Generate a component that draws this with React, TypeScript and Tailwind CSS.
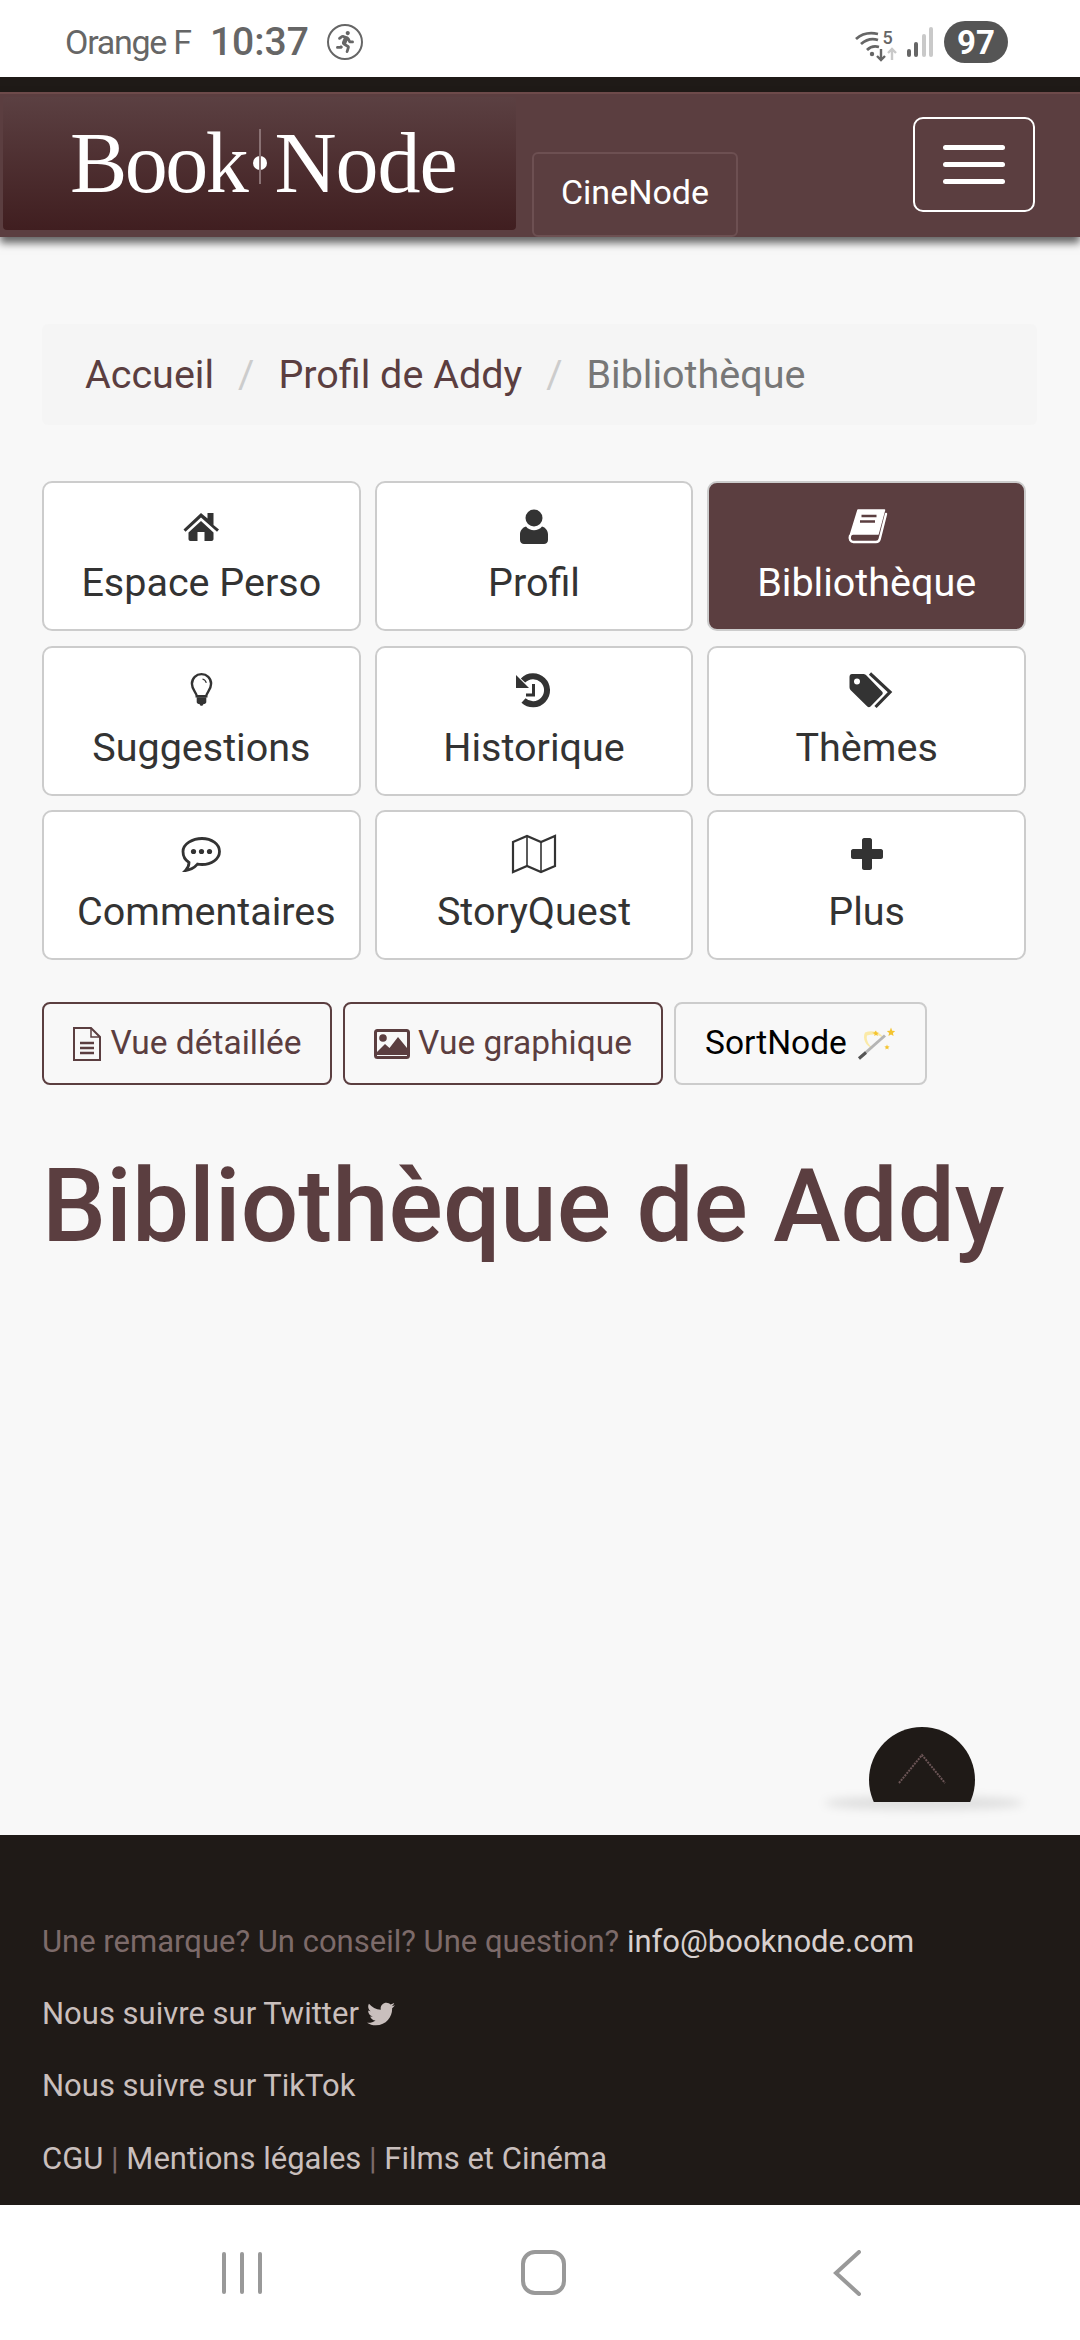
import { FaRunning, FaTwitter } from "react-icons/fa";

function HomeIcon() {
  return (
    <svg viewBox="0 0 60 50" className="h-[50px] w-[60px]" fill="#333">
      <path d="M36.500 13h6v12l5.500 4.500-2 2.200L30 17.500 14.500 31.700l-2-2.200L30 13l6.500 5.500V13z" />
      <path d="M30 21l12.500 11.500V39c0 1.200-.8 2-2 2h-7v-9h-7v9h-7c-1.200 0-2-.8-2-2v-6.500L30 21z" />
    </svg>
  );
}

function UserIcon() {
  return (
    <svg viewBox="0 0 60 50" className="h-[50px] w-[60px]" fill="#333">
      <circle cx="30" cy="18" r="8.500" />
      <path d="M22 26.500c2 2.500 5 3.800 8 3.800s6-1.300 8-3.800c3.500 1 6 4 6 8V40c0 2.500-2 4-4 4H20c-2 0-4-1.500-4-4v-5.500c0-4 2.500-7 6-8z" />
    </svg>
  );
}

function BookIcon() {
  return (
    <svg viewBox="0 0 60 50" className="h-[50px] w-[60px]" fill="none" stroke="#fff">
      <path d="M21 10h26.500L41 34H16c-1.200 0-2 .6-3 2l8-26z" fill="#fff" strokeWidth="1.500" strokeLinejoin="round" />
      <path d="M13 36c-1 3 .5 6 3.500 6H39c2 0 3.200-1 3.700-3L49 14" strokeWidth="2.400" strokeLinecap="round" />
      <path d="M24.500 16h15M23 21.500h15" stroke="#5b3e40" strokeWidth="2.400" />
    </svg>
  );
}

function BulbIcon() {
  return (
    <svg viewBox="0 0 24 36" className="h-[35px] w-[23px]" fill="none" stroke="#333">
      <path d="M7 25c0-4-5-6.500-5-13C2 6 6.500 2 12 2s10 4 10 10c0 6.500-5 9-5 13H7z" strokeWidth="2.500" />
      <path d="M13 7c2 .5 3.500 2 4 4" strokeWidth="1.200" />
      <path d="M7 26h10v5c0 1-1 2-2 2h-1c0 1-1 2-2 2s-2-1-2-2H9c-1 0-2-1-2-2v-5z" fill="#333" stroke="none" />
    </svg>
  );
}

function HistoryIcon() {
  return (
    <svg viewBox="0 0 60 50" className="h-[50px] w-[60px]" fill="none" stroke="#333">
      <path d="M19 15.500A14 14 0 1 1 19.500 35.500" strokeWidth="6" />
      <path d="M12 10v13h13L12 10z" fill="#333" stroke="none" />
      <path d="M29.500 19v11H22" strokeWidth="3" />
    </svg>
  );
}

function TagsIcon() {
  return (
    <svg viewBox="0 0 60 50" className="h-[50px] w-[60px]" fill="none">
      <path
        fillRule="evenodd"
        clipRule="evenodd"
        d="M15 9h11c1.500 0 2.500.5 3.500 1.500L45 26.500c1 1 1 2.200 0 3.200L33.500 41.500c-1 1-2.200 1-3.200 0L14 25.500c-1-1-1.500-2-1.500-3.500V12c0-2 1-3 2.500-3zM20 13.500a3 3 0 1 0 0 6 3 3 0 0 0 0-6z"
        fill="#333"
      />
      <path d="M33 8.500l20 18.500-14.500 15" stroke="#333" strokeWidth="3.200" />
    </svg>
  );
}

function CommentIcon() {
  return (
    <svg viewBox="0 0 40 35" className="h-[35px] w-[40px]" fill="none" stroke="#333">
      <path d="M21 1.500c9.500 0 17.500 5.500 17.500 13S30.500 27.500 21 27.500c-1.500 0-3-.1-4.500-.4C13.500 30.500 9 33 4.500 33.500c2-2 3.500-4.500 3.500-8C4 23 2 19 2 14.500 2 7 11.500 1.500 21 1.500z" strokeWidth="2.800" />
      <circle cx="12.500" cy="14.500" r="2.600" fill="#333" stroke="none" />
      <circle cx="20.500" cy="14.500" r="2.600" fill="#333" stroke="none" />
      <circle cx="28.500" cy="14.500" r="2.600" fill="#333" stroke="none" />
    </svg>
  );
}

function MapIcon() {
  return (
    <svg viewBox="0 0 46 40" className="h-[40px] w-[46px]" fill="none" stroke="#333" strokeWidth="2.200">
      <path d="M2 8l14-6 14 6 14-6v30l-14 6-14-6-14 6V8z" />
      <path d="M16 2v30M30 8v30" strokeWidth="1.600" />
    </svg>
  );
}

function PlusIcon() {
  return (
    <svg viewBox="0 0 32 32" className="h-[32px] w-[32px]" fill="#333">
      <path d="M13 0h6c1 0 2 1 2 2v9h9c1 0 2 1 2 2v6c0 1-1 2-2 2h-9v9c0 1-1 2-2 2h-6c-1 0-2-1-2-2v-9H2c-1 0-2-1-2-2v-6c0-1 1-2 2-2h9V2c0-1 1-2 2-2z" />
    </svg>
  );
}

function FileIcon() {
  return (
    <svg viewBox="0 0 30 34" className="h-[34px] w-[30px]" fill="none" stroke="#5b3e40" strokeWidth="2">
      <path d="M2 1h17l9 9v23H2V1z" />
      <path d="M19 1v9h9" strokeWidth="1.500" />
      <path d="M8 16h14M8 21h14M8 26h14" strokeWidth="2.400" />
    </svg>
  );
}

function PictureIcon() {
  return (
    <svg viewBox="0 0 36 30" className="h-[30px] w-[36px]">
      <rect x="1.500" y="1.500" width="33" height="27" rx="2" fill="none" stroke="#5b3e40" strokeWidth="3" />
      <circle cx="9" cy="9" r="3.800" fill="#5b3e40" />
      <path d="M3 26v-3l8-8 4.500 4L24 8l9 11v7H3z" fill="#5b3e40" />
    </svg>
  );
}

function WandIcon() {
  return (
    <svg viewBox="0 0 38 34" className="h-[37px] w-[38px]">
      <path d="M8 6c8-3 16 0 19 6-5-4-10-5-17-3-1 4 1 9 6 13-7-2-11-10-8-16z" fill="#fbe89a" opacity="0.85" />
      <path d="M2 32L28 9" stroke="#b5b5b5" strokeWidth="3" />
      <path d="M2 32l7-6" stroke="#555" strokeWidth="3" />
      <path d="M34 1l1.200 3.200 3 .3-2.300 2 .7 3-2.600-1.600-2.600 1.600.7-3-2.300-2 3-.3z" fill="#f4c430" />
      <path d="M19 4l.8 2 2 .2-1.500 1.300.5 2-1.800-1-1.800 1 .5-2L15.200 6.200l2-.2z" fill="#f4c430" />
      <path d="M30 18l.7 1.800 1.900.2-1.400 1.200.4 1.800-1.600-1-1.600 1 .4-1.800-1.400-1.200 1.900-.2z" fill="#f4c430" />
    </svg>
  );
}

function WifiIcon() {
  return (
    <svg viewBox="0 0 50 40" className="h-[40px] w-[50px]" fill="none">
      <path d="M5 17Q14 9 27 12" stroke="#666" strokeWidth="2.800" />
      <path d="M10 22Q18 15 27 18" stroke="#666" strokeWidth="2.800" />
      <path d="M16 28Q21 23 28 25" stroke="#666" strokeWidth="2.800" />
      <circle cx="21" cy="32" r="2.200" fill="#666" />
      <path d="M30 27v11M26 34l4 4 4-4" stroke="#666" strokeWidth="2.400" />
      <path d="M41 38V27M37 31l4-4 4 4" stroke="#c9c9c9" strokeWidth="2.400" />
    </svg>
  );
}

const menu = [
  { label: "Espace Perso", icon: <HomeIcon /> },
  { label: "Profil", icon: <UserIcon /> },
  { label: "Bibliothèque", icon: <BookIcon />, active: true },
  { label: "Suggestions", icon: <BulbIcon /> },
  { label: "Historique", icon: <HistoryIcon /> },
  { label: "Thèmes", icon: <TagsIcon /> },
  { label: "Commentaires", icon: <CommentIcon />, nudge: true },
  { label: "StoryQuest", icon: <MapIcon /> },
  { label: "Plus", icon: <PlusIcon /> },
];

export default function App() {
  return (
    <div className="flex h-[2340px] w-[1080px] flex-col overflow-hidden bg-[#f8f8f8] font-['Roboto',sans-serif]">
      {/* status bar */}
      <div className="flex h-[77px] items-center bg-white pl-[65px] pr-[72px] pt-[7px] text-[#666]">
        <span className="text-[34px] tracking-[-1.250px]">Orange F</span>
        <span className="ml-[19px] text-[39px] font-medium leading-none">10:37</span>
        <span className="ml-[18px] flex h-[36px] w-[36px] items-center justify-center rounded-full border-[2px] border-[#666]">
          <FaRunning size={22} color="#666" />
        </span>
        <div className="ml-auto flex items-center">
          <div className="relative h-[40px]">
            <WifiIcon />
            <span className="absolute left-[32px] top-[7px] text-[18px] font-medium leading-none">5</span>
          </div>
          <div className="ml-[6px] flex h-[30px] items-end gap-[3.500px]">
            <span className="h-[8px] w-[4px] rounded-full bg-[#666]" />
            <span className="h-[15px] w-[4px] rounded-full bg-[#666]" />
            <span className="h-[23px] w-[4px] rounded-full bg-[#c9c9c9]" />
            <span className="h-[30px] w-[4px] rounded-full bg-[#c9c9c9]" />
          </div>
          <span className="ml-[11px] flex h-[42px] w-[64px] items-center justify-center rounded-full bg-[#555] text-[33px] font-bold leading-none text-white">
            97
          </span>
        </div>
      </div>
      <div className="h-[15px] bg-[#1f1a17]" />

      {/* navbar */}
      <nav className="z-10 flex h-[145px] border-t-[2px] border-[#6d4a4a] bg-[#5b3e40] shadow-[0_6px_8px_rgba(0,0,0,0.6)]">
        <div className="ml-[3px] mt-[3px] flex h-[133px] w-[513px] items-center rounded-[4px] bg-gradient-to-b from-[#5b4042] to-[#401e20] pb-[2px] pl-[67px] font-['Liberation_Serif',serif] text-[86px] leading-none text-white">
          <span className="tracking-[-2.500px]">Book</span>
          <span className="relative mx-[7px] h-[14px] w-[14px] rounded-full bg-white">
            <span className="absolute left-[6px] top-[-27px] h-[55px] w-[2px] bg-[#8a7274]" />
          </span>
          <span className="tracking-[-1px]">Node</span>
        </div>
        <div className="ml-[16px] mt-[58px] flex h-[85px] w-[206px] items-center justify-center rounded-[6px] border-[2px] border-[#6d5052] pb-[5px] text-[34px] text-white">
          CineNode
        </div>
        <div className="ml-auto mr-[45px] mt-[23px] flex h-[95px] w-[122px] flex-col items-center justify-center gap-[12px] rounded-[10px] border-[2px] border-white">
          <span className="h-[5px] w-[62px] rounded-full bg-white" />
          <span className="h-[5px] w-[62px] rounded-full bg-white" />
          <span className="h-[5px] w-[62px] rounded-full bg-white" />
        </div>
      </nav>

      {/* main */}
      <main className="relative flex-1 px-[42px] pt-[87px]">
        <div className="flex h-[101px] w-[995px] items-center gap-[24px] rounded-[6px] bg-[#f5f5f5] pl-[43px] text-[39.500px] text-[#5b3e40]">
          <span>Accueil</span>
          <span className="text-[#ccc]">/</span>
          <span>Profil de Addy</span>
          <span className="text-[#ccc]">/</span>
          <span className="text-[#777]">Bibliothèque</span>
        </div>

        <div className="mt-[56px] grid w-[984px] grid-cols-3 gap-x-[14px] gap-y-[14.500px]">
          {menu.map((item) => (
            <div
              key={item.label}
              className={
                item.active
                  ? "flex h-[150px] flex-col items-center rounded-[10px] border-[2px] border-[#ccc] bg-[#5b3e40] pt-[17px] text-white"
                  : "flex h-[150px] flex-col items-center rounded-[10px] border-[2px] border-[#ccc] bg-white pt-[17px] text-[#333]"
              }
            >
              <div className="flex h-[50px] items-center justify-center">{item.icon}</div>
              <div className={item.nudge ? "ml-[10px] mt-[10px] whitespace-nowrap text-[39.500px] leading-[46px]" : "mt-[10px] whitespace-nowrap text-[39.500px] leading-[46px]"}>
                {item.label}
              </div>
            </div>
          ))}
        </div>

        <div className="mt-[42px] flex gap-[11px] text-[33.500px] text-[#5b3e40]">
          <div className="flex h-[83px] w-[290px] items-center justify-center gap-[8px] rounded-[8px] border-[2px] border-[#5b3e40]">
            <FileIcon />
            <span>Vue détaillée</span>
          </div>
          <div className="flex h-[83px] w-[320px] items-center justify-center gap-[8px] rounded-[8px] border-[2px] border-[#5b3e40]">
            <PictureIcon />
            <span>Vue graphique</span>
          </div>
          <div className="flex h-[83px] w-[253px] items-center gap-[10px] rounded-[8px] border-[2px] border-[#ccc] pl-[29px] text-black">
            <span>SortNode</span>
            <WandIcon />
          </div>
        </div>

        <h1 className="mt-[63px] whitespace-nowrap text-[101.500px] font-medium leading-[118px] text-[#5b3e40]">
          Bibliothèque de Addy
        </h1>

        {/* back to top */}
        <div className="absolute bottom-[25px] left-[824px] h-[14px] w-[200px] rounded-[50%] bg-black/10 blur-[5px]" />
        <div className="absolute bottom-[33px] left-[869px] h-[75px] w-[106px] overflow-hidden">
          <div className="flex h-[106px] w-[106px] justify-center rounded-full bg-[#1f1a17] pt-[26px]">
            <svg viewBox="0 0 50 32" className="h-[32px] w-[50px]" fill="none" stroke="#6b5556" strokeWidth="2" strokeDasharray="2 1">
              <path d="M2 30L25 2l23 28" />
            </svg>
          </div>
        </div>
      </main>

      {/* footer */}
      <footer className="flex h-[370px] flex-col bg-[#1f1a17] pl-[42px] pt-[89px] text-[31px] leading-[36px] text-[#c9bfbd]">
        <div className="text-[#7d6b6a]">
          Une remarque? Un conseil? Une question? <span className="text-[#d8d0ce]">info@booknode.com</span>
        </div>
        <div className="mt-[36px] flex items-center gap-[8px]">
          Nous suivre sur Twitter <FaTwitter size={28} />
        </div>
        <div className="mt-[36px]">Nous suivre sur TikTok</div>
        <div className="mt-[37px]">
          CGU <span className="text-[#7d6b6a]">|</span> Mentions légales <span className="text-[#7d6b6a]">|</span> Films et Cinéma
        </div>
      </footer>

      {/* android nav bar */}
      <div className="flex h-[135px] items-center bg-white pl-[222px]">
        <div className="flex gap-[14px]">
          <span className="h-[42px] w-[4px] rounded-full bg-[#999]" />
          <span className="h-[42px] w-[4px] rounded-full bg-[#999]" />
          <span className="h-[42px] w-[4px] rounded-full bg-[#999]" />
        </div>
        <span className="ml-[259px] h-[45px] w-[45px] rounded-[14px] border-[4px] border-[#999]" />
        <svg viewBox="0 0 28 46" className="ml-[267px] h-[46px] w-[28px]" fill="none" stroke="#999" strokeWidth="4" strokeLinecap="round">
          <path d="M26 2L3 23l23 21" />
        </svg>
      </div>
    </div>
  );
}
